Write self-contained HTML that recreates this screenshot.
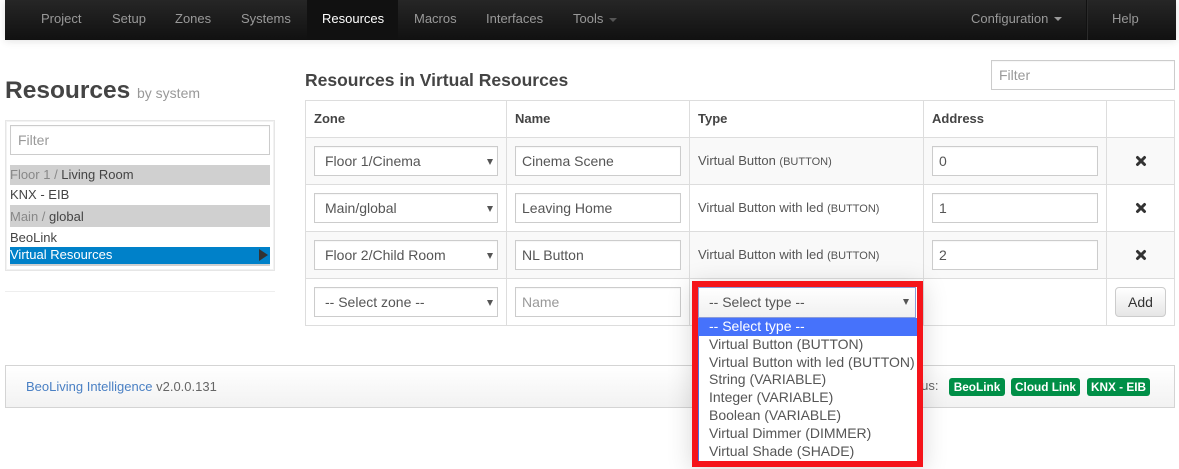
<!DOCTYPE html>
<html><head><meta charset="utf-8"><style>
*{box-sizing:border-box}
html,body{margin:0;padding:0;width:1179px;height:469px;overflow:hidden;background:#fff;font-family:"Liberation Sans",sans-serif;color:#555;font-size:14px}
.a{position:absolute;white-space:nowrap}
.nav{left:5px;top:0;width:1171px;height:40px;background:linear-gradient(#262626,#111);box-shadow:0 1px 8px rgba(0,0,0,.12)}
.n{top:11px;font-size:13px;line-height:16px;color:#999}
.line{background:#ddd}
.sel,.inp{height:30px;border:1px solid #ccc;background:#fff;line-height:28px;padding-left:10px;color:#555;box-shadow:inset 0 1px 1px rgba(0,0,0,.04)}
.inp{padding-left:6px}
.sel::after{content:"";position:absolute;right:4px;top:12px;border-left:3.5px solid transparent;border-right:3.5px solid transparent;border-top:6px solid #555}
.ph{color:#999}
.s{font-size:13px;top:0;line-height:16px;color:#555}
.s small{font-size:11px}
.th{font-weight:bold;font-size:13px;line-height:16px;color:#444;top:111px}
.x{left:1134px;width:14px;height:14px}
.it{left:10px;width:260px;font-size:13px;line-height:20px;padding-left:0;color:#444}
.g{color:#888}
.o{left:709px;font-size:14px;line-height:18px;color:#555}
.b{top:378px;height:18px;background:#008f47;color:#fff;font-weight:bold;font-size:11.8px;line-height:18px;text-align:center;border-radius:3px}
</style></head><body>
<div class="a nav"></div>
<div class="a" style="left:307px;top:0;width:91px;height:40px;background:#111"></div>
<div class="a n" style="left:41px">Project</div>
<div class="a n" style="left:112px">Setup</div>
<div class="a n" style="left:175px">Zones</div>
<div class="a n" style="left:241px">Systems</div>
<div class="a n" style="left:322px;color:#fff">Resources</div>
<div class="a n" style="left:414px">Macros</div>
<div class="a n" style="left:486px">Interfaces</div>
<div class="a n" style="left:573px">Tools</div>
<div class="a" style="left:609px;top:18px;border-left:4px solid transparent;border-right:4px solid transparent;border-top:4px solid #555"></div>
<div class="a n" style="left:971px">Configuration</div>
<div class="a" style="left:1054px;top:17px;border-left:4px solid transparent;border-right:4px solid transparent;border-top:4px solid #999"></div>
<div class="a" style="left:1086px;top:0;width:1px;height:40px;background:#111"></div>
<div class="a" style="left:1087px;top:0;width:1px;height:40px;background:#2b2b2b"></div>
<div class="a n" style="left:1112px">Help</div>

<div class="a" style="left:5px;top:76px;font-size:24.5px;line-height:30px;font-weight:bold;color:#444">Resources</div>
<div class="a" style="left:137px;top:85px;font-size:14px;line-height:16px;color:#999">by system</div>
<div class="a" style="left:5px;top:120px;width:270px;height:151px;border:1px solid #e6e6e6;box-shadow:inset 0 0 0 1px #f2f2f2"></div>
<div class="a inp ph" style="left:10px;top:125px;width:260px;padding-left:7px">Filter</div>
<div class="a it" style="top:165px;height:20px;background:#d0d0d0"><span class="g">Floor 1 / </span>Living Room</div>
<div class="a it" style="top:185px">KNX - EIB</div>
<div class="a it" style="top:205px;height:22px;line-height:23px;background:#d0d0d0"><span class="g">Main / </span>global</div>
<div class="a it" style="top:228px">BeoLink</div>
<div class="a" style="left:10px;top:264px;width:260px;height:2px;background:#d0d0d0"></div>
<div class="a it" style="top:247px;height:17px;line-height:15px;background:#0081c9;color:#fff">Virtual Resources</div>
<div class="a" style="left:259px;top:249px;border-top:6px solid transparent;border-bottom:6px solid transparent;border-left:9px solid #333"></div>
<div class="a" style="left:5px;top:291px;width:270px;height:1px;background:#eee"></div>

<div class="a" style="left:305px;top:70px;font-size:17.5px;line-height:20px;font-weight:bold;color:#444">Resources in Virtual Resources</div>
<div class="a inp ph" style="left:991px;top:60px;width:184px;padding-left:7px">Filter</div>

<div class="a" style="left:306px;top:138px;width:868px;height:46px;background:#f9f9f9"></div>
<div class="a" style="left:306px;top:232px;width:868px;height:46px;background:#f9f9f9"></div>
<div class="a line" style="left:305px;top:100px;width:870px;height:1px"></div>
<div class="a line" style="left:305px;top:137px;width:870px;height:1px"></div>
<div class="a line" style="left:305px;top:184px;width:870px;height:1px"></div>
<div class="a line" style="left:305px;top:231px;width:870px;height:1px"></div>
<div class="a line" style="left:305px;top:278px;width:870px;height:1px"></div>
<div class="a line" style="left:305px;top:325px;width:870px;height:1px"></div>
<div class="a line" style="left:305px;top:100px;width:1px;height:226px"></div>
<div class="a line" style="left:506px;top:100px;width:1px;height:226px"></div>
<div class="a line" style="left:689px;top:100px;width:1px;height:226px"></div>
<div class="a line" style="left:923px;top:100px;width:1px;height:226px"></div>
<div class="a line" style="left:1106px;top:100px;width:1px;height:226px"></div>
<div class="a line" style="left:1174px;top:100px;width:1px;height:226px"></div>

<div class="a th" style="left:314px">Zone</div>
<div class="a th" style="left:515px">Name</div>
<div class="a th" style="left:698px">Type</div>
<div class="a th" style="left:932px">Address</div>

<div class="a sel" style="left:314px;top:146px;width:184px">Floor 1/Cinema</div>
<div class="a inp" style="left:515px;top:146px;width:166px">Cinema Scene</div>
<div class="a s" style="left:698px;top:153px">Virtual Button <small>(BUTTON)</small></div>
<div class="a inp" style="left:932px;top:146px;width:166px">0</div>
<svg class="a x" style="top:154px" viewBox="0 0 14 14"><path d="M3.5 3.5L10.5 10.5M10.5 3.5L3.5 10.5" stroke="#333" stroke-width="3" stroke-linecap="round"/></svg>

<div class="a sel" style="left:314px;top:193px;width:184px">Main/global</div>
<div class="a inp" style="left:515px;top:193px;width:166px">Leaving Home</div>
<div class="a s" style="left:698px;top:200px">Virtual Button with led <small>(BUTTON)</small></div>
<div class="a inp" style="left:932px;top:193px;width:166px">1</div>
<svg class="a x" style="top:201px" viewBox="0 0 14 14"><path d="M3.5 3.5L10.5 10.5M10.5 3.5L3.5 10.5" stroke="#333" stroke-width="3" stroke-linecap="round"/></svg>

<div class="a sel" style="left:314px;top:240px;width:184px">Floor 2/Child Room</div>
<div class="a inp" style="left:515px;top:240px;width:166px">NL Button</div>
<div class="a s" style="left:698px;top:247px">Virtual Button with led <small>(BUTTON)</small></div>
<div class="a inp" style="left:932px;top:240px;width:166px">2</div>
<svg class="a x" style="top:248px" viewBox="0 0 14 14"><path d="M3.5 3.5L10.5 10.5M10.5 3.5L3.5 10.5" stroke="#333" stroke-width="3" stroke-linecap="round"/></svg>

<div class="a sel" style="left:314px;top:287px;width:184px">-- Select zone --</div>
<div class="a inp ph" style="left:515px;top:287px;width:166px">Name</div>
<div class="a" style="left:1115px;top:287px;width:51px;height:30px;border:1px solid #ccc;border-radius:4px;background:linear-gradient(#fff,#e6e6e6);text-align:center;line-height:28px;color:#333">Add</div>

<div class="a" style="left:5px;top:365px;width:1170px;height:43px;border:1px solid #d4d4d4;background:linear-gradient(#fff,#f2f2f2)"></div>
<div class="a" style="left:26px;top:379px;font-size:13px;line-height:16px;color:#666"><span style="color:#4a80c4">BeoLiving Intelligence</span> v2.0.0.131</div>
<div class="a" style="left:898px;top:378px;font-size:13px;line-height:16px;color:#666">Status:</div>
<div class="a b" style="left:949px;width:56px">BeoLink</div>
<div class="a b" style="left:1011px;width:69px">Cloud Link</div>
<div class="a b" style="left:1087px;width:63px">KNX - EIB</div>

<div class="a" style="left:692px;top:281px;width:231px;height:186px;background:#f5141a;box-shadow:0 4px 24px rgba(0,0,0,.16)"></div>
<div class="a" style="left:698px;top:287px;width:219px;height:174px;background:#fff"></div>
<div class="a" style="left:698px;top:287px;width:218px;height:31px;border:1px solid #8a9bd8;background:linear-gradient(#fff,#f0f0f0);line-height:29px;padding-left:10px;color:#555">-- Select type --</div>
<div class="a" style="left:903px;top:299px;border-left:3.5px solid transparent;border-right:3.5px solid transparent;border-top:6px solid #555"></div>
<div class="a" style="left:698px;top:318px;width:1px;height:143px;background:#4a70e0"></div>
<div class="a" style="left:698px;top:318px;width:219px;height:18px;background:#4672fb"></div>
<div class="a o" style="top:317px;color:#fff">-- Select type --</div>
<div class="a o" style="top:335px">Virtual Button (BUTTON)</div>
<div class="a o" style="top:353px">Virtual Button with led (BUTTON)</div>
<div class="a o" style="top:370px">String (VARIABLE)</div>
<div class="a o" style="top:388px">Integer (VARIABLE)</div>
<div class="a o" style="top:406px">Boolean (VARIABLE)</div>
<div class="a o" style="top:424px">Virtual Dimmer (DIMMER)</div>
<div class="a o" style="top:442px">Virtual Shade (SHADE)</div>
</body></html>
